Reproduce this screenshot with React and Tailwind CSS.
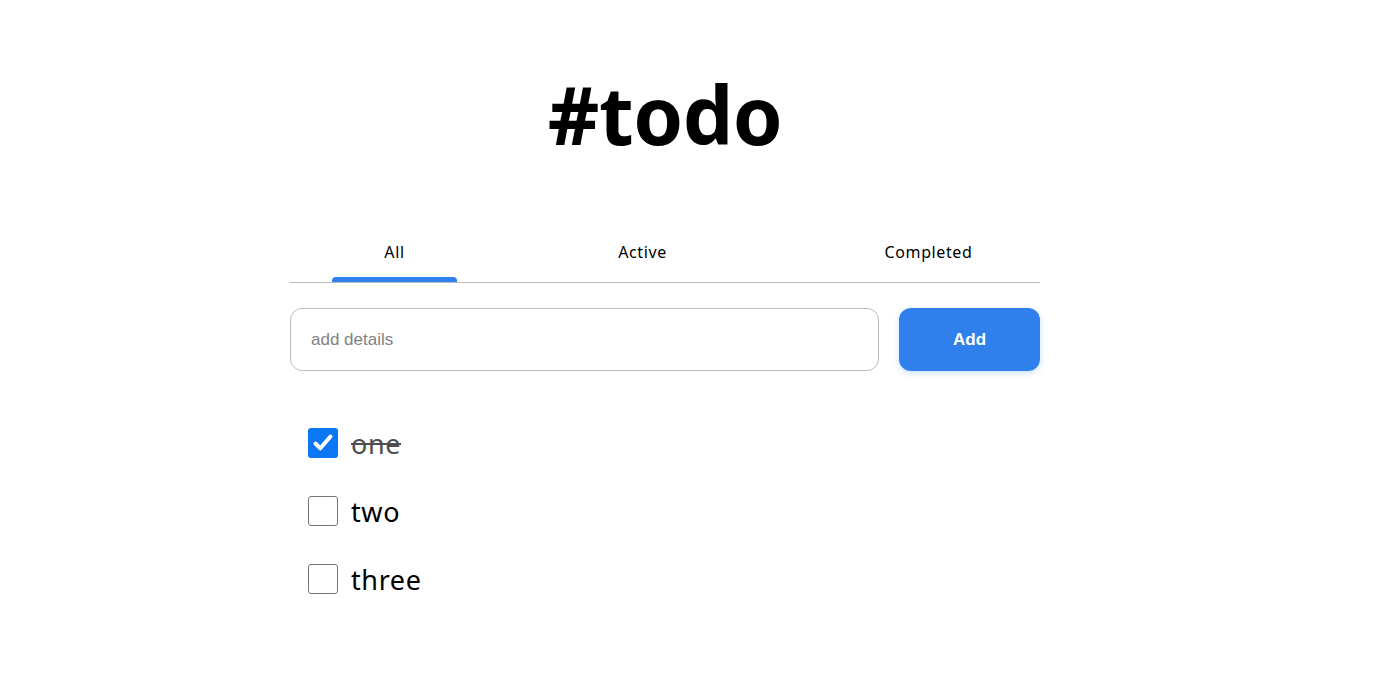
import React, { useState } from "react";

const items = [
  { id: 1, text: "one", done: true },
  { id: 2, text: "two", done: false },
  { id: 3, text: "three", done: false },
];

const Check = ({ done }) =>
  done ? (
    <span className="flex h-[30px] w-[30px] items-center justify-center rounded-[3px] bg-[#0b77f5]">
      <svg width="24" height="24" viewBox="0 0 24 24" fill="none">
        <path d="M4.5 12.5l4.8 4.8L19.5 5.5" stroke="white" strokeWidth="4" strokeLinecap="round" strokeLinejoin="round" />
      </svg>
    </span>
  ) : (
    <span className="h-[30px] w-[30px] rounded-[3px] border border-[#767676] bg-white" />
  );

export default function App() {
  const [tab] = useState("All");

  return (
    <div className="min-h-screen bg-white font-['Noto_Sans',sans-serif] text-black">
      <div className="ml-[290px] w-[750px] pt-[74px]">
        <h1 className="text-center text-[80px] font-bold leading-none tracking-[-0.5px]">#todo</h1>

        {/* tabs */}
        <div className="mt-[88px] flex border-b border-[#bdbdbd] pl-[42px]">
          <div className="flex w-[125px] flex-col items-center">
            <span className="text-[16px] leading-[20px] tracking-[0.6px]">All</span>
            <span className={"mt-[15px] h-[5px] w-full rounded-t-[4px] " + (tab === "All" ? "bg-[#2f80ed]" : "")} />
          </div>
          <div className="ml-[123px] flex w-[125px] flex-col items-center">
            <span className="text-[16px] leading-[20px] tracking-[0.6px]">Active</span>
          </div>
          <div className="ml-[161px] flex w-[125px] flex-col items-center">
            <span className="text-[16px] leading-[20px] tracking-[0.6px]">Completed</span>
          </div>
        </div>

        {/* input row */}
        <div className="mt-[25px] flex gap-[20px]">
          <input
            placeholder="add details"
            className="h-[63px] flex-1 rounded-[12px] border border-[#bdbdbd] px-[20px] font-['Liberation_Sans',sans-serif] text-[17px] outline-none placeholder:text-[#828282]"
          />
          <button className="h-[63px] w-[141px] rounded-[12px] bg-[#2f80ed] font-['Liberation_Sans',sans-serif] text-[17px] font-bold text-white shadow-[0_2px_6px_rgba(127,177,243,0.4)]">
            Add
          </button>
        </div>

        {/* list */}
        <ul className="mt-[57px] flex flex-col gap-[38px] pl-[18px]">
          {items.map((it) => (
            <li key={it.id} className="flex h-[30px] items-center gap-[13px]">
              <Check done={it.done} />
              <span className={"text-[27px] leading-none tracking-[0.6px] " + (it.done ? "text-[#4f4f4f] line-through" : "")}>
                {it.text}
              </span>
            </li>
          ))}
        </ul>
      </div>
    </div>
  );
}
